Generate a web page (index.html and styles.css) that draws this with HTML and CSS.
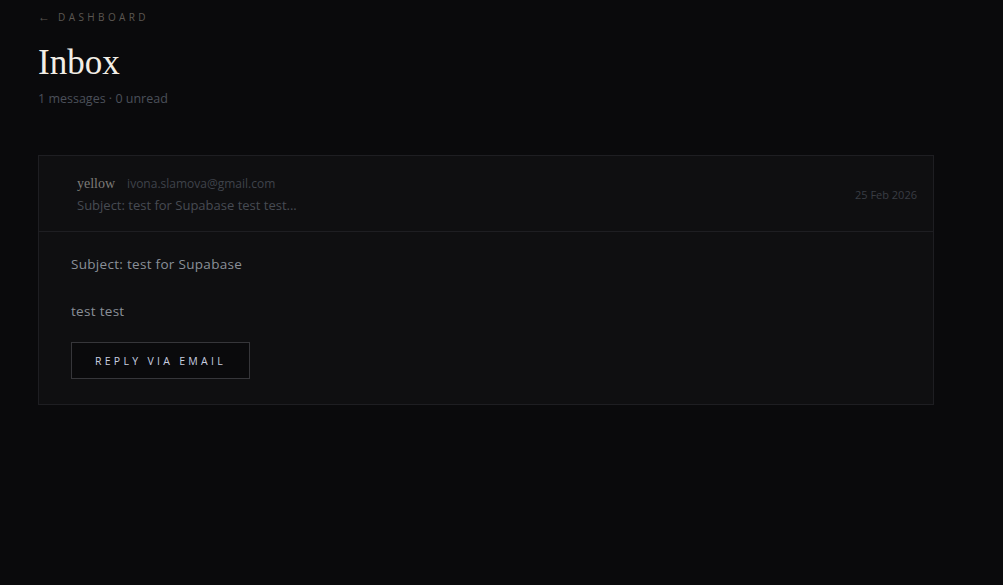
FILE: index.html
```html
<!DOCTYPE html>
<html lang="en">
<head>
<meta charset="utf-8">
<title>Inbox</title>
<link rel="stylesheet" href="styles.css">
</head>
<body>
<div class="wrap">
  <a class="back" href="#"><span class="arr">&larr;</span> Dashboard</a>
  <h1 class="title">Inbox</h1>
  <p class="count">1 messages &middot; 0 unread</p>

  <div class="msg">
    <div class="msg-head">
      <div class="msg-from">
        <div class="who"><span class="name">yellow</span><span class="mail">ivona.slamova@gmail.com</span></div>
        <div class="preview">Subject: test for Supabase test test...</div>
      </div>
      <div class="date">25 Feb 2026</div>
    </div>
    <div class="msg-body">
      <p>Subject: test for Supabase</p>
      <p>test test</p>
      <button class="reply">Reply via email</button>
    </div>
  </div>
</div>
</body>
</html>
```

FILE: styles.css
```css
*,*::before,*::after {box-sizing: border-box;}
body {
  margin: 0;
  background: #0a0a0c;
  font-family: "Open Sans", "Liberation Sans", sans-serif;
  color: #8a8f98;
}
.wrap {
  padding: 10px 69px 0 38px;
}
.back {
  display: block;
  font-size: 10px;
  letter-spacing: 3.4px;
  text-transform: uppercase;
  color: #5c5752;
  text-decoration: none;
  line-height: 14px;
}
.back .arr {
  font-size: 12px;
  letter-spacing: 2px;
}
.title {
  font-family: "Liberation Serif", serif;
  font-weight: normal;
  font-size: 35px;
  color: #f2eee6;
  margin: 19px 0 0;
  line-height: 40px;
}
.count {
  margin: 8px 0 0;
  font-size: 12.5px;
  color: #4b505a;
  line-height: 16px;
}
.msg {
  margin-top: 48px;
  background: #0f0f11;
  border: 1px solid #1e1e22;
}
.msg-head {
  display: flex;
  align-items: center;
  justify-content: space-between;
  padding: 17px 16px 16px 38px;
  border-bottom: 1px solid #1e1e22;
}
.who {
  display: flex;
  align-items: baseline;
  gap: 12px;
  line-height: 22px;
}
.name {
  font-family: "Liberation Serif", serif;
  font-size: 14px;
  color: #7d7b77;
}
.mail {
  font-size: 12px;
  color: #3f434b;
}
.preview {
  font-size: 13px;
  color: #474b53;
  line-height: 20px;
}
.date {
  font-size: 11px;
  color: #3a3d44;
}
.msg-body {
  padding: 23px 32px 25px;
}
.msg-body p {
  margin: 0 0 29px;
  font-size: 13.5px;
  letter-spacing: 0.3px;
  line-height: 18px;
  color: #8a8f98;
}
.msg-body p + p {
  margin-bottom: 22px;
}
.reply {
  display: block;
  width: 179px;
  height: 37px;
  background: #0a0a0c;
  border: 1px solid #36363a;
  color: #c8cfe0;
  font-family: "Open Sans", "Liberation Sans", sans-serif;
  font-size: 10.5px;
  letter-spacing: 3.3px;
  text-transform: uppercase;
  cursor: pointer;
}
```
